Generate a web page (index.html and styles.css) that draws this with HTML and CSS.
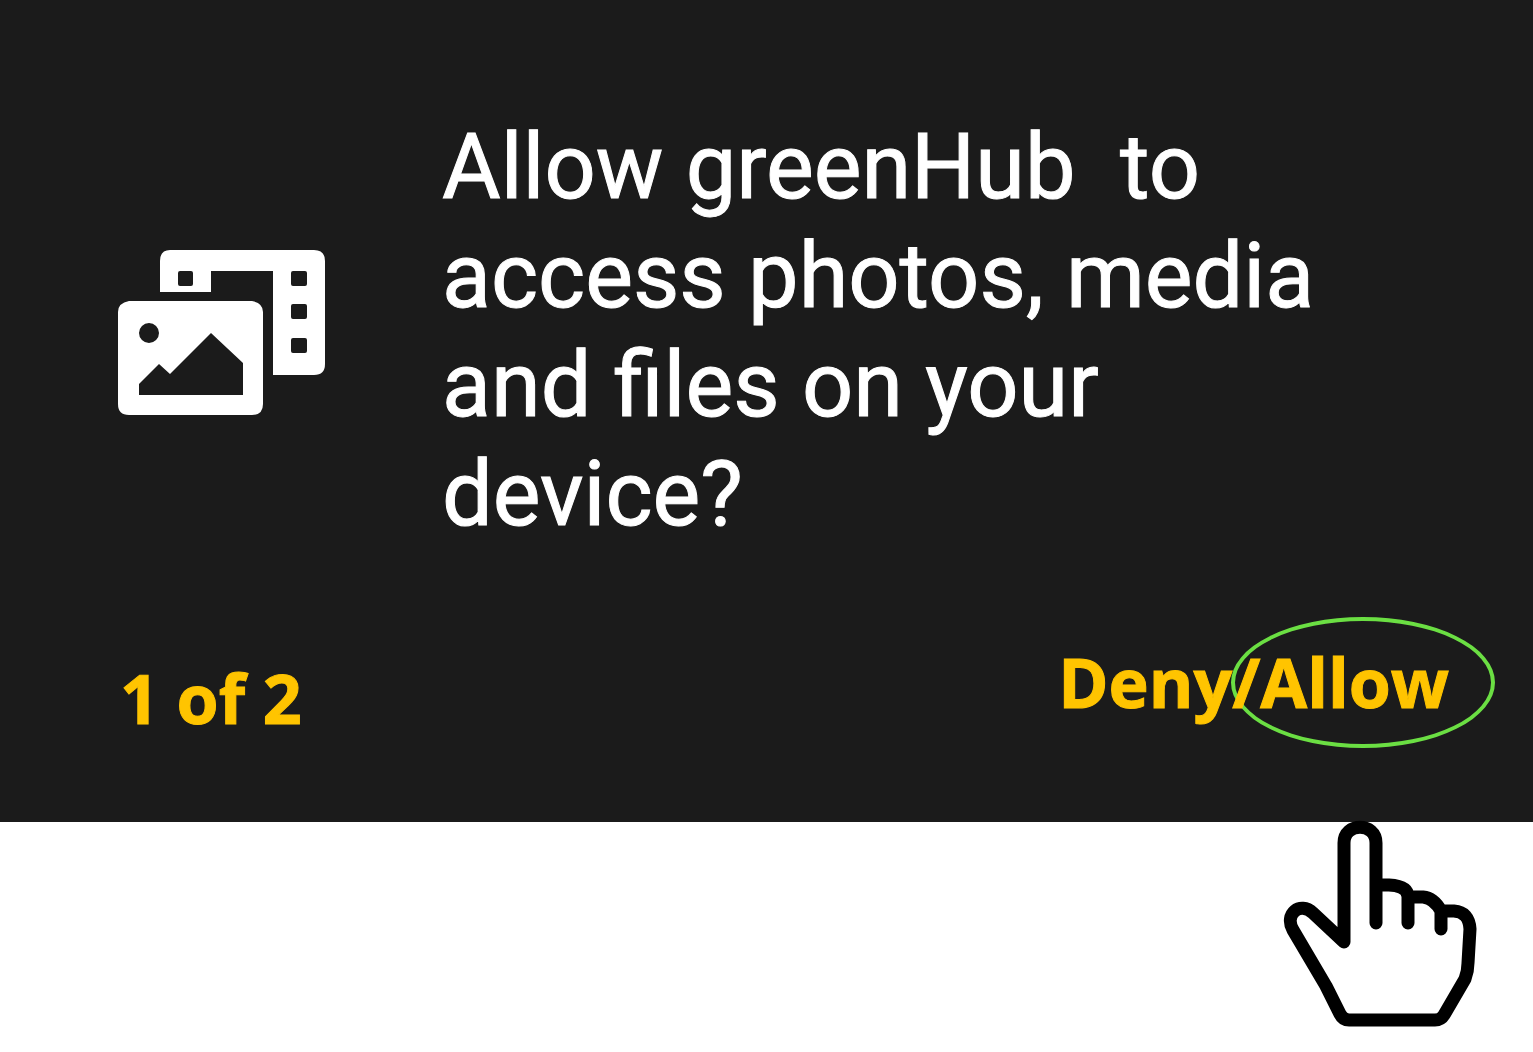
FILE: index.html
```html
<!DOCTYPE html>
<html lang="en">
<head>
<meta charset="utf-8">
<meta name="viewport" content="width=device-width, initial-scale=1">
<title>greenHub permission request</title>
<link rel="stylesheet" href="styles.css">
</head>
<body>
<main class="dialog">
  <div class="request">
    <svg class="media-icon" viewBox="0 0 207 166" aria-hidden="true">
      <path fill="currentColor" fill-rule="evenodd" d="M52 0H196Q207 0 207 11V114Q207 125 196 125H155V21H93V42H42V11Q42 0 52 0ZM62 21Q60 21 60 23V34Q60 36 62 36H73Q75 36 75 34V23Q75 21 73 21ZM175 21Q173 21 173 23V34Q173 36 175 36H187Q189 36 189 34V23Q189 21 187 21ZM175 54Q173 54 173 56V67Q173 69 175 69H187Q189 69 189 67V56Q189 54 187 54ZM175 88Q173 88 173 90V101Q173 103 175 103H187Q189 103 189 101V90Q189 88 187 88Z"/>
      <path fill="currentColor" fill-rule="evenodd" d="M11 51H134Q145 53 145 62V154Q145 165 134 165H11Q0 165 0 154V62Q0 53 11 51ZM31 73A10 10 0 1 0 31 93A10 10 0 1 0 31 73ZM21 145H125V113L93 83L52 124L41 114L21 134Z"/>
    </svg>
    <h1 class="message">Allow greenHub&nbsp; to access photos, media and files on your device?</h1>
  </div>
  <div class="footer">
    <p class="count">1 of 2</p>
    <div class="actions"><button class="action" type="button">Deny</button><span>/</span><button class="action action-allow" type="button">Allow</button></div>
  </div>
</main>
<div class="pointer">
  <svg class="hand" viewBox="0 0 194 206" aria-hidden="true">
    <path fill="none" stroke="#000" stroke-width="13" stroke-linecap="round" stroke-linejoin="round" d="M92 102V22C92 1 60 1 60 22V121L29 92C16 80 0 93 9 109L42 165L56 193Q59 199 65 199H151Q157 199 160 194L181 158Q184 150 184 142L186 108Q185 91 170 90H157M92 64H105Q124 65 124 76V102M124 76H139Q150 77 157 90V108"/>
  </svg>
</div>
</body>
</html>
```
FILE: styles.css
```css
* {
  box-sizing: border-box;
}

body {
  margin: 0;
  background: #fff;
  font-family: Roboto, sans-serif;
}

.dialog {
  padding: 113px 84px 77px 118px;
  background: #1b1b1b;
  color: #fff;
  -webkit-text-stroke: 1px currentColor;
}

.request {
  display: flex;
  align-items: flex-start;
  gap: 117px;
}

.media-icon {
  flex: none;
  width: 207px;
  height: 166px;
  margin-top: 137px;
}

.message {
  flex: 1;
  max-width: 920px;
  margin: 0;
  font-size: 90px;
  font-weight: 400;
  line-height: 109px;
}

.footer {
  display: flex;
  justify-content: space-between;
  align-items: flex-start;
  margin-top: 85px;
  color: #ffc400;
  font: 700 68px/95px "Open Sans", sans-serif;
}

.count {
  margin: 16px 0 0 2px;
}

.actions {
  display: flex;
  isolation: isolate;
}

.action {
  position: relative;
  padding: 0;
  border: 0;
  background: none;
  color: inherit;
  font: inherit;
  cursor: pointer;
}

.action-allow::before {
  content: "";
  position: absolute;
  z-index: -1;
  inset: -17px -46px -19px -29px;
  border: 4px solid #6bdf43;
  border-radius: 50%;
}

.pointer {
  display: flex;
  justify-content: flex-end;
  padding: 0 55px 24px;
}

.hand {
  width: 194px;
  height: 206px;
  margin-top: -1px;
  overflow: visible;
}
```
